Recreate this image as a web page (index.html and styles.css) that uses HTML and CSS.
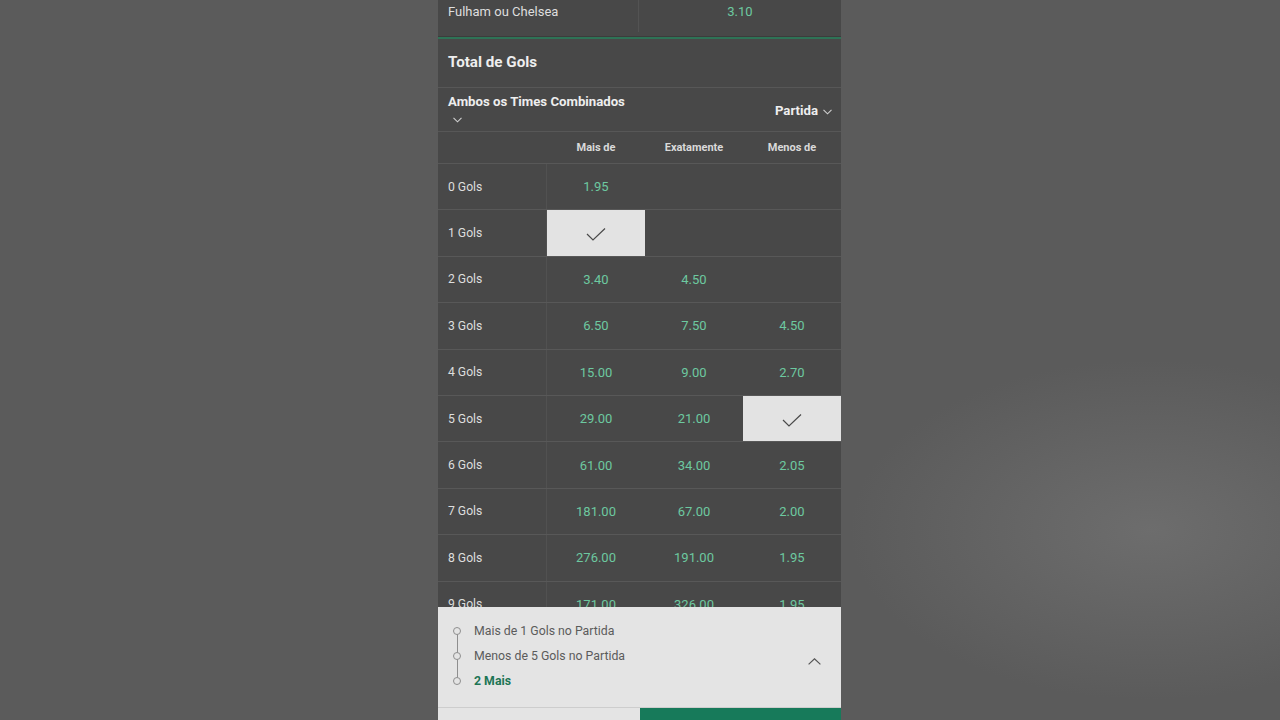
FILE: index.html
```html
<!DOCTYPE html>
<html lang="pt-BR">
<head>
<meta charset="utf-8">
<title>Total de Gols</title>
<link rel="stylesheet" href="styles.css">
</head>
<body>
<div class="phone">
  <div class="prev-row">
    <div class="prev-label">Fulham ou Chelsea</div>
    <div class="prev-odd">3.10</div>
  </div>
  <div class="market-title">Total de Gols</div>
  <div class="market-sub">
    <div class="sub-left">
      <span class="sub-name">Ambos os Times Combinados</span>
      <svg class="chev-down" width="9" height="6" viewBox="0 0 9 6"><polyline points="0.5,0.8 4.5,4.8 8.5,0.8" fill="none" stroke="#cfcfcf" stroke-width="1.1"/></svg>
    </div>
    <div class="sub-right">
      <span>Partida</span>
      <svg width="9" height="6" viewBox="0 0 9 6"><polyline points="0.5,0.8 4.5,4.8 8.5,0.8" fill="none" stroke="#cfcfcf" stroke-width="1.1"/></svg>
    </div>
  </div>
  <div class="table">
    <div class="row head">
      <div class="cell label"></div>
      <div class="cell">Mais de</div>
      <div class="cell">Exatamente</div>
      <div class="cell">Menos de</div>
    </div>
    <div class="row"><div class="cell label">0 Gols</div><div class="cell odd">1.95</div><div class="cell odd"></div><div class="cell odd"></div></div>
    <div class="row"><div class="cell label">1 Gols</div><div class="cell odd sel"><svg width="20" height="14" viewBox="0 0 20 14"><polyline points="1,7 7,13 19,1.5" fill="none" stroke="#4a4a4a" stroke-width="1.2"/></svg></div><div class="cell odd"></div><div class="cell odd"></div></div>
    <div class="row"><div class="cell label">2 Gols</div><div class="cell odd">3.40</div><div class="cell odd">4.50</div><div class="cell odd"></div></div>
    <div class="row"><div class="cell label">3 Gols</div><div class="cell odd">6.50</div><div class="cell odd">7.50</div><div class="cell odd">4.50</div></div>
    <div class="row"><div class="cell label">4 Gols</div><div class="cell odd">15.00</div><div class="cell odd">9.00</div><div class="cell odd">2.70</div></div>
    <div class="row"><div class="cell label">5 Gols</div><div class="cell odd">29.00</div><div class="cell odd">21.00</div><div class="cell odd sel"><svg width="20" height="14" viewBox="0 0 20 14"><polyline points="1,7 7,13 19,1.5" fill="none" stroke="#4a4a4a" stroke-width="1.2"/></svg></div></div>
    <div class="row"><div class="cell label">6 Gols</div><div class="cell odd">61.00</div><div class="cell odd">34.00</div><div class="cell odd">2.05</div></div>
    <div class="row"><div class="cell label">7 Gols</div><div class="cell odd">181.00</div><div class="cell odd">67.00</div><div class="cell odd">2.00</div></div>
    <div class="row"><div class="cell label">8 Gols</div><div class="cell odd">276.00</div><div class="cell odd">191.00</div><div class="cell odd">1.95</div></div>
    <div class="row"><div class="cell label">9 Gols</div><div class="cell odd">171.00</div><div class="cell odd">326.00</div><div class="cell odd">1.95</div></div>
  </div>
  <div class="slip">
    <div class="slip-main">
      <ul class="legs">
        <li class="leg"><span class="dot"></span><span>Mais de 1 Gols no Partida</span></li>
        <li class="leg"><span class="dot"></span><span>Menos de 5 Gols no Partida</span></li>
        <li class="leg more"><span class="dot"></span><span>2 Mais</span></li>
      </ul>
      <svg class="chev-up" width="13" height="7" viewBox="0 0 13 7"><polyline points="0.6,6.4 6.5,0.8 12.4,6.4" fill="none" stroke="#555" stroke-width="1.2"/></svg>
    </div>
    <div class="slip-bar">
      <div class="bar-left"></div>
      <div class="bar-right"></div>
    </div>
  </div>
</div>
</body>
</html>
```

FILE: styles.css
```css
* { box-sizing: border-box; }

html, body {
  margin: 0;
  padding: 0;
  height: 720px;
  overflow: hidden;
}

body {
  font-family: Roboto, "Liberation Sans", Arial, sans-serif;
  background-color: #5b5b5b;
  background-image:
    radial-gradient(ellipse 300px 170px at 1150px 530px, rgba(112,112,112,0.85), rgba(91,91,91,0) 100%);
}

.phone {
  position: relative;
  width: 403px;
  height: 720px;
  margin-left: calc(50% - 202px);
  background: #484848;
  overflow: hidden;
  color: #e2e2e2;
}

/* previous market row */
.prev-row {
  display: flex;
  height: 39px;
  border-bottom: 2px solid #2e7356;
  box-shadow: inset 0 -1px 0 #3c3c3c;
}
.prev-label {
  width: 201px;
  padding: 3px 0 0 10px;
  font-size: 13px;
  line-height: 18px;
  color: #dedede;
  border-right: 1px solid #535353;
  height: 32px;
}
.prev-odd {
  flex: 1;
  text-align: center;
  padding-top: 3px;
  font-size: 13px;
  line-height: 18px;
  color: #6dc9a0;
}

.market-title {
  padding: 13px 10px 15px;
  font-size: 15.2px;
  line-height: 20px;
  font-weight: 700;
  color: #eeeeee;
  border-bottom: 1px solid #575757;
}

.market-sub {
  display: flex;
  justify-content: space-between;
  border-bottom: 1px solid #575757;
  height: 44px;
}
.sub-left {
  padding: 5px 0 0 10px;
  display: flex;
  flex-direction: column;
}
.sub-name {
  font-size: 13.2px;
  line-height: 18px;
  font-weight: 700;
  color: #eeeeee;
}
.chev-down {
  display: block;
  margin: 6px 0 0 5px;
}
.sub-right {
  display: flex;
  align-items: center;
  gap: 5px;
  padding-right: 9px;
  padding-top: 2px;
  font-size: 13.2px;
  font-weight: 700;
  color: #eeeeee;
}
.sub-right svg { margin-top: 3px; }

/* table */
.table { display: flex; flex-direction: column; }
.row {
  display: grid;
  grid-template-columns: 109px 1fr 1fr 1fr;
  height: 46.4px;
  border-top: 1px solid #585858;
}
.row.head {
  height: 31px;
  border-top: none;
}
.cell {
  display: flex;
  align-items: center;
  justify-content: center;
  font-size: 13px;
  color: #6dc9a0;
}
.head .cell {
  font-size: 11px;
  font-weight: 700;
  color: #d9d9d9;
}
.cell.label {
  justify-content: flex-start;
  padding-left: 10px;
  font-size: 12.2px;
  color: #dedede;
  border-right: 1px solid #515151;
}
.head .cell.label { border-right: none; }
.cell.sel {
  background: #e3e3e3;
}
.cell.sel svg { margin-top: 2px; }

/* bet slip overlay */
.slip {
  position: absolute;
  left: 0;
  right: 0;
  bottom: 0;
  height: 113px;
  background: #e4e4e4;
  display: flex;
  flex-direction: column;
}
.slip-main {
  height: 101px;
  display: flex;
  justify-content: space-between;
  align-items: center;
  border-bottom: 1px solid #cdcdcd;
  padding-right: 20px;
}
.legs {
  list-style: none;
  margin: 0;
  padding: 11px 0 14px 15px;
  position: relative;
}
.legs::before {
  content: "";
  position: absolute;
  left: 18.5px;
  top: 23px;
  height: 50px;
  width: 1.3px;
  background: #8e8e8e;
}
.leg {
  display: flex;
  align-items: center;
  gap: 13px;
  height: 25px;
  font-size: 12.3px;
  color: #5b5b5b;
}
.leg.more {
  font-weight: 700;
  color: #1d7555;
}
.dot {
  position: relative;
  width: 8px;
  height: 8px;
  border-radius: 50%;
  border: 1.3px solid #8e8e8e;
  background: #e4e4e4;
}
.chev-up { margin-top: 8px; }

.slip-bar {
  flex: 1;
  display: flex;
}
.bar-left { width: 202px; background: #e4e4e4; }
.bar-right { flex: 1; background: #177a5a; }
```
